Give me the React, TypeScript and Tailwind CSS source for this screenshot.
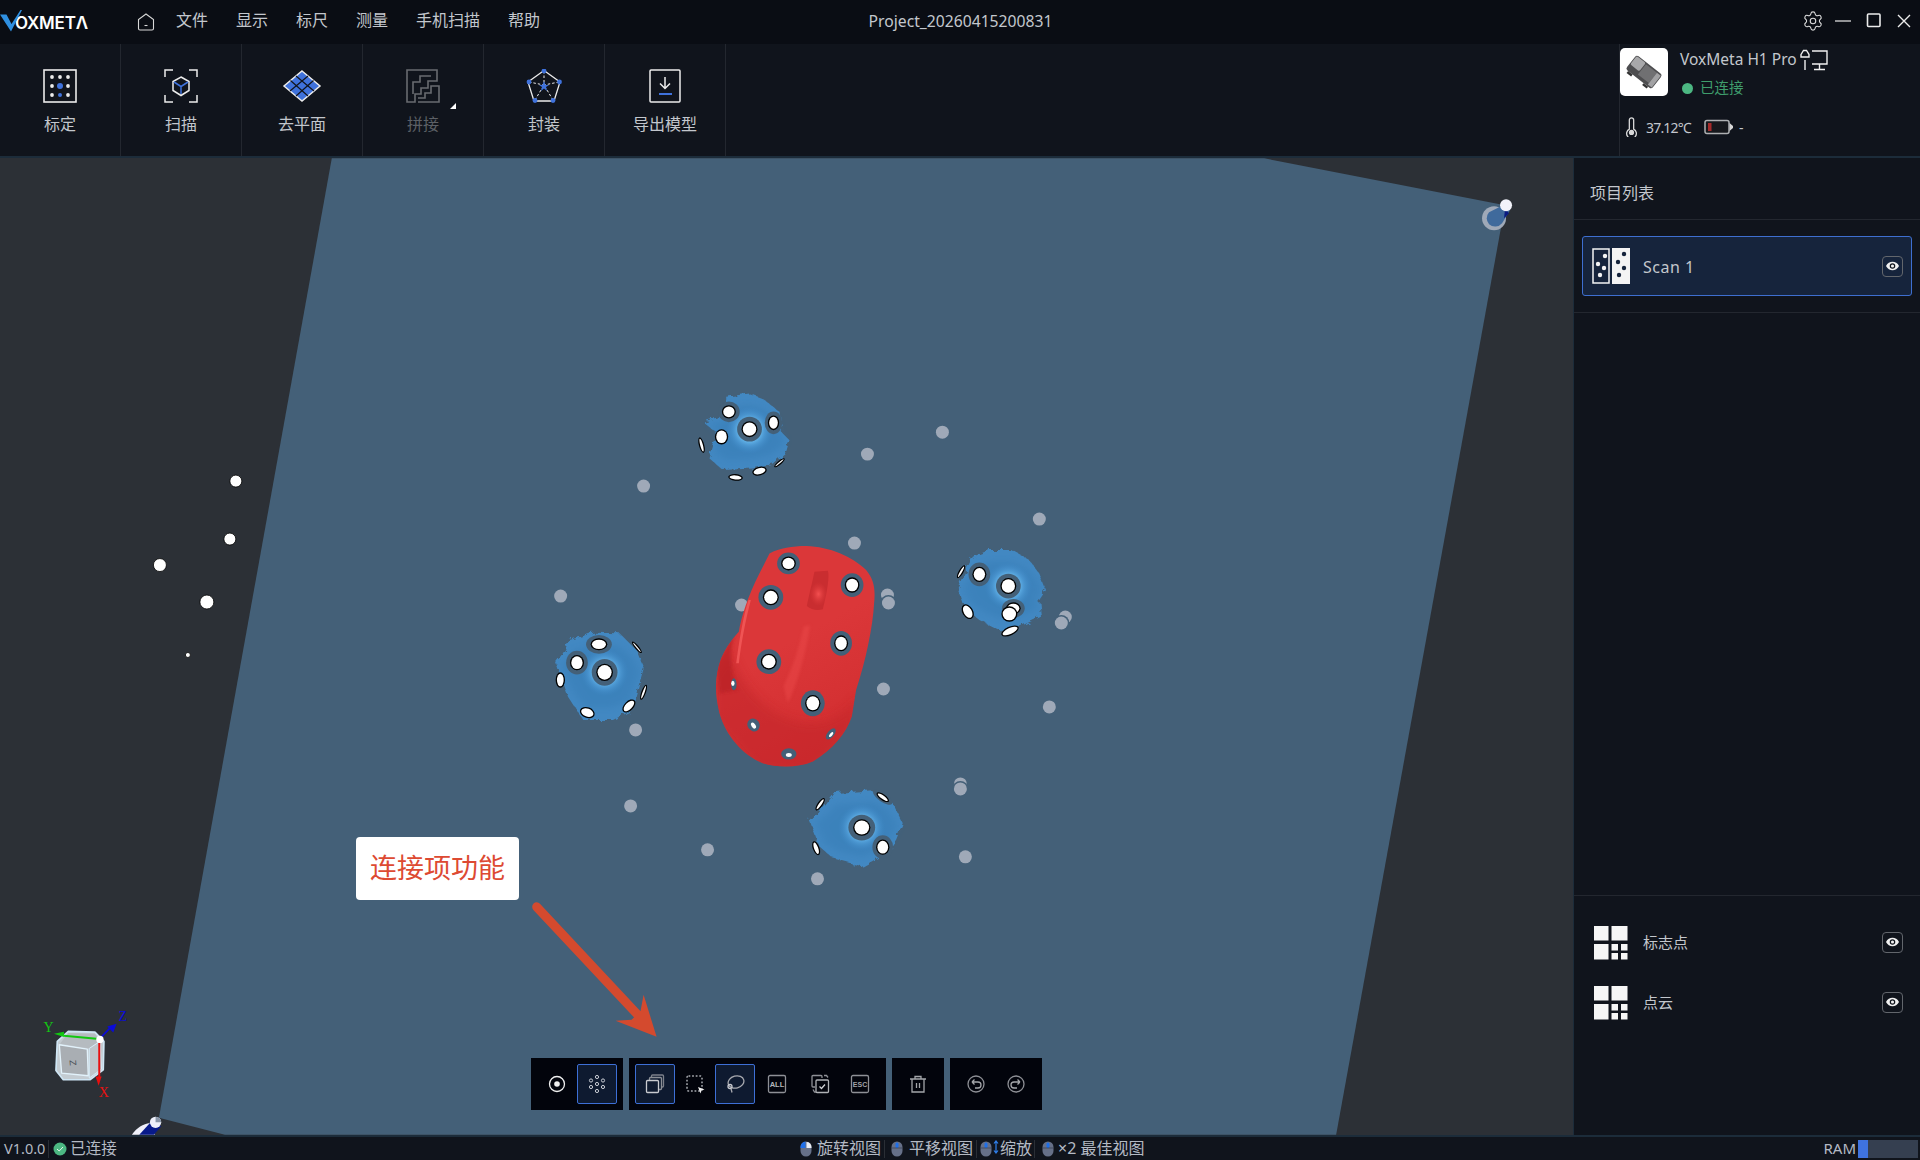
import React from "react";
import { Settings } from "lucide-react";

const W = "#ececec";
const B = "#3f72dc";

const IconCalib = () => (
  <svg viewBox="0 0 34 34" className="w-[34px] h-[34px]">
    <rect x="1" y="1" width="32" height="32" fill="none" stroke={W} strokeWidth="1.6" />
    {[9, 25].map((x) => [8, 17, 26].map((y) => <circle key={`${x}${y}`} cx={x} cy={y} r="1.9" fill={W} />))}
    <circle cx="17" cy="8" r="1.9" fill={W} />
    <circle cx="17" cy="17" r="3" fill={B} />
    <circle cx="17" cy="26" r="2" fill={B} />
  </svg>
);
const IconScan = () => (
  <svg viewBox="0 0 34 34" className="w-[34px] h-[34px]" fill="none" stroke={W} strokeWidth="1.5">
    <path d="M1 8V1H9M25 1H33V8M1 26V33H9M25 33H33V26" />
    <path d="M17 8L25 12.5V21.5L17 26.5L9 21.5V12.5Z" />
    <path d="M10 13L17 17.5L24 13M17 17.5V25" stroke={B} />
  </svg>
);
const IconPlane = () => (
  <svg viewBox="0 0 40 34" className="w-[40px] h-[34px]">
    <path d="M20 2L38 17L20 32L2 17Z" fill={B} stroke={W} strokeWidth="1.5" />
    <path d="M14 7L32 22M8.500 11.500L26 27M26 7L8 22M31.500 11.500L14 27" stroke="#10141c" strokeWidth="1.2" />
  </svg>
);
const IconStitch = () => (
  <svg viewBox="0 0 34 34" className="w-[34px] h-[34px]" fill="none" stroke="#686b70" strokeWidth="1.6">
    <path d="M1 33V1H31V12H22V19H15V25H9V33Z" />
    <path d="M7 25V13H14V7H25" />
    <path d="M12 33H33V17H25V24H19V29H12" />
  </svg>
);
const IconSeal = () => (
  <svg viewBox="0 0 36 34" className="w-[36px] h-[34px]">
    <path d="M18 1.500L34 13L28 32H8L2 13Z" fill="none" stroke={W} strokeWidth="1.3" />
    <path d="M18 2V16M3 13L18 16M33 13L18 16M9 31L18 16M27 31L18 16" stroke={W} strokeWidth="1" strokeDasharray="2.500 2" />
    <path d="M18 12L19.500 16H23L20 18L21 22L18 19.500L15 22L16 18L13 16H16.500Z" fill={B} />
    {[[18, 2], [33.5, 13], [3, 13], [9, 31.500], [27, 31.500]].map(([x, y]) => <circle key={x} cx={x} cy={y} r="2.400" fill={B} />)}
  </svg>
);
const IconExport = () => (
  <svg viewBox="0 0 34 34" className="w-[34px] h-[34px]">
    <rect x="2" y="1" width="30" height="32" rx="1" fill="none" stroke={W} strokeWidth="1.500" />
    <path d="M17 8V19M12 14.500L17 19.500L22 14.500" fill="none" stroke={W} strokeWidth="1.500" />
    <rect x="11" y="24" width="13" height="2" fill={B} />
  </svg>
);

const tools = [
  { label: "标定", icon: <IconCalib /> },
  { label: "扫描", icon: <IconScan /> },
  { label: "去平面", icon: <IconPlane /> },
  { label: "拼接", icon: <IconStitch />, dim: true },
  { label: "封装", icon: <IconSeal /> },
  { label: "导出模型", icon: <IconExport /> },
];

const Eye = () => (
  <div className="w-[21px] h-[21px] rounded-[4px] border border-[#62666c] flex items-center justify-center">
    <svg viewBox="0 0 14 10" className="w-[13px] h-[10px]">
      <path d="M0 5C3 -1 11 -1 14 5C11 11 3 11 0 5Z" fill="#f2f2f2" />
      <circle cx="7" cy="5" r="3" fill="#10141c" />
      <circle cx="7" cy="5" r="1.700" fill="#f2f2f2" />
    </svg>
  </div>
);

const GridIcon = () => (
  <svg viewBox="0 0 34 34" className="w-[34px] h-[34px]" fill="#f6f6f6">
    <rect x="0" y="0" width="14.500" height="14.500" />
    <rect x="17.500" y="0" width="16" height="14.500" />
    <rect x="0" y="18" width="14.500" height="15.500" />
    <rect x="17.500" y="18" width="6.500" height="6.500" />
    <rect x="27" y="18" width="6.500" height="6.500" />
    <rect x="17.500" y="27" width="6.500" height="6.500" />
    <rect x="27" y="27" width="6.500" height="6.500" />
  </svg>
);

const ScanIcon = () => (
  <svg viewBox="0 0 38 36" className="w-[38px] h-[36px]">
    <rect x="1" y="1" width="16" height="34" fill="#16243c" stroke="#f4f4f4" strokeWidth="1.500" />
    <rect x="20" y="0" width="18" height="36" fill="#f4f4f4" />
    {[[13, 8], [6, 16], [12, 20], [8, 27]].map(([x, y]) => <circle key={`${x}${y}`} cx={x} cy={y} r="2.200" fill="#f4f4f4" />)}
    {[[32, 6], [26, 14], [32, 20], [27, 27]].map(([x, y]) => <circle key={`${x}${y}`} cx={x} cy={y} r="2.200" fill="#16243c" />)}
  </svg>
);

const MouseIcon = ({ part }: { part: "l" | "m" }) => (
  <svg viewBox="0 0 12 16" className="w-[12px] h-[16px] shrink-0">
    <rect x="0.500" y="0.500" width="11" height="15" rx="5.500" fill="#667088" />
    {part === "l" ? (
      <path d="M5.500 0.500A5.500 5.500 0 0 0 0.500 6V7H5.500Z" fill="#1f6fe8" />
    ) : (
      <rect x="4.500" y="1.500" width="3" height="5.500" rx="1.500" fill="#1f6fe8" />
    )}
    {part === "l" && <path d="M6.500 1A5 5 0 0 1 11.500 6V7H6.500Z" fill="#e9edf3" />}
    {part === "m" && <path d="M0.500 7H11.500" stroke="#303848" strokeWidth="0.600" />}
  </svg>
);

type E = [number, number, number, number, number?];

const Mark = ({ m, halo }: { m: E; halo?: boolean }) => {
  const [x, y, rx, ry, a = 0] = m;
  return (
    <g transform={`rotate(${a} ${x} ${y})`}>
      {halo && <ellipse cx={x} cy={y} rx={rx * 1.55} ry={ry * 1.55} fill="#446078" />}
      <ellipse cx={x} cy={y} rx={rx} ry={ry} fill="#000" />
      <ellipse cx={x} cy={y} rx={Math.max(rx - 4, 1)} ry={Math.max(ry - 4, 1)} fill="#fff" />
    </g>
  );
};

const spheres: { tx: number; ty: number; poly: string; glow: [number, number]; marks: E[] }[] = [
  {
    tx: 680, ty: 380, glow: [210, 150],
    poly: "140,50 210,40 250,55 300,95 310,160 330,180 320,215 280,250 220,265 130,270 90,235 100,200 115,160 70,125 120,110 140,80",
    marks: [[148, 95, 21, 20], [210, 147, 24, 24], [282, 128, 17, 22], [126, 170, 20, 23], [66, 195, 8, 24, -15], [240, 273, 22, 13, -15], [168, 292, 22, 10, 5], [300, 248, 20, 6, -40]],
  },
  {
    tx: 940, ty: 530, glow: [207, 168],
    poly: "150,60 215,60 270,90 300,130 320,180 300,210 305,260 240,290 180,300 120,270 75,230 55,170 70,140 100,80",
    marks: [[120, 133, 21, 23], [222, 235, 22, 18], [207, 168, 24, 24], [210, 252, 24, 23], [65, 125, 7, 22, 30], [85, 245, 16, 24, -30], [212, 303, 28, 13, -25]],
  },
  {
    tx: 540, ty: 620, glow: [195, 157],
    poly: "90,60 160,38 240,40 290,90 315,150 300,200 280,270 220,300 130,300 85,230 50,125 70,100",
    marks: [[178, 73, 25, 18], [112, 128, 21, 23], [195, 157, 25, 26], [62, 180, 14, 23], [292, 82, 22, 6, 50], [312, 217, 7, 24, 20], [268, 258, 24, 14, -45], [143, 278, 23, 16, 20]],
  },
  {
    tx: 790, ty: 770, glow: [217, 173],
    poly: "130,70 260,60 310,100 340,160 320,210 290,250 220,290 130,265 90,230 60,150 100,110",
    marks: [[217, 173, 26, 25], [280, 232, 20, 23], [280, 82, 22, 9, 35], [92, 103, 22, 8, -55], [80, 235, 22, 10, 70]],
  },
];

const greyDots: [number, number][] = [
  [644, 486], [868, 454], [943, 432], [1040, 519], [855, 543], [742, 605], [561, 596], [884, 689],
  [1050, 707], [636, 730], [631, 806], [708, 850], [966, 857], [818, 879],
];
const doubleDots: [number, number, number, number][] = [
  [889, 603, 888, 595],
  [1062, 623, 1066, 617],
  [961, 789, 961, 784],
];
const whiteDots: [number, number, number][] = [[236, 481, 6], [230, 539, 6], [160, 565, 6.500], [207, 602, 7], [188, 655, 2.500]];

const Viewport = () => (
  <svg viewBox="0 158 1574 977" className="block w-full h-full">
    <defs>
      <radialGradient id="glow">
        <stop offset="0.400" stopColor="#6fc2f5" />
        <stop offset="0.650" stopColor="#55a3de" stopOpacity="0.600" />
        <stop offset="1" stopColor="#3d86c6" stopOpacity="0" />
      </radialGradient>
      <linearGradient id="body" x1="0.300" y1="0.500" x2="0.500" y2="1">
        <stop offset="0" stopColor="#db3739" />
        <stop offset="1" stopColor="#d22e30" />
      </linearGradient>
      <radialGradient id="lit">
        <stop offset="0" stopColor="#f35050" />
        <stop offset="1" stopColor="#dc3638" stopOpacity="0" />
      </radialGradient>
      <filter id="rough" x="-10%" y="-10%" width="120%" height="120%">
        <feTurbulence type="fractalNoise" baseFrequency="0.050" numOctaves="3" seed="4" />
        <feDisplacementMap in="SourceGraphic" scale="22" />
      </filter>
      <filter id="soft" x="-30%" y="-30%" width="160%" height="160%">
        <feGaussianBlur stdDeviation="14" />
      </filter>
      <filter id="soft2" x="-50%" y="-50%" width="200%" height="200%">
        <feGaussianBlur stdDeviation="5" />
      </filter>
      <clipPath id="mouseClip">
        <path d="M270 100C300 85 340 78 380 78C450 80 520 110 560 150C585 180 588 210 584 250C580 320 560 420 530 510L517 590C500 640 460 690 400 725C360 742 300 745 250 730C190 705 140 650 120 580C105 520 105 470 125 415C140 380 160 355 178 335C185 290 205 230 240 160Z" />
      </clipPath>
    </defs>
    <polygon points="332,158 1265,158 1506,205 1337,1135 225,1135 159,1118" fill="#446078" />

    {greyDots.map(([x, y]) => <circle key={`${x}${y}`} cx={x} cy={y} r="6.500" fill="#9fa9b8" />)}
    {doubleDots.map(([x, y, bx, by]) => (
      <g key={x}>
        <circle cx={bx} cy={by} r="6.500" fill="#9fa9b8" />
        <circle cx={x} cy={y} r="8" fill="#446078" />
        <circle cx={x} cy={y} r="6.500" fill="#9fa9b8" />
      </g>
    ))}
    {whiteDots.map(([x, y, r]) => <circle key={x} cx={x} cy={y} r={r} fill="#fff" stroke="#000" strokeWidth="0.800" />)}

    {spheres.map((s) => (
      <g key={s.tx} transform={`translate(${s.tx} ${s.ty}) scale(0.3333)`}>
        <polygon points={s.poly} fill="#4288c2" filter="url(#rough)" />
        <polygon points={s.poly} fill="#2f74ad" opacity="0.300" filter="url(#soft)" transform={`translate(${s.glow[0] * 0.12} ${s.glow[1] * 0.3}) scale(0.88 0.72)`} />
        <circle cx={s.glow[0]} cy={s.glow[1]} r="72" fill="url(#glow)" />
        {s.marks.map((m, i) => <Mark key={i} m={m} halo={i < 3} />)}
      </g>
    ))}

    <g transform="translate(680 520) scale(0.3333)">
      <path d="M270 100C300 85 340 78 380 78C450 80 520 110 560 150C585 180 588 210 584 250C580 320 560 420 530 510L517 590C500 640 460 690 400 725C360 742 300 745 250 730C190 705 140 650 120 580C105 520 105 470 125 415C140 380 160 355 178 335C185 290 205 230 240 160Z" fill="url(#body)" />
      <g clipPath="url(#mouseClip)">
        <path d="M185 470C240 560 320 610 400 610C460 610 510 570 535 530L517 640L400 760L230 750L100 600L100 480L150 400Z" fill="#c32729" opacity="0.550" filter="url(#soft)" />
        <path d="M170 330C150 380 150 450 175 510L120 520L110 430Z" fill="#b92325" opacity="0.700" filter="url(#soft2)" />
        <path d="M372 320L392 315C385 370 360 480 325 550L312 500C340 440 360 380 372 320Z" fill="#f05050" opacity="0.400" filter="url(#soft2)" />
      </g>
      <path d="M207 240C190 290 178 370 170 430L178 430C185 370 198 300 214 240Z" fill="#ef5454" />
      <path d="M405 155L445 152C452 170 440 230 430 268C415 272 395 270 382 258C390 220 400 180 405 155Z" fill="#c92d30" />
      <ellipse cx="417" cy="222" rx="26" ry="36" fill="url(#lit)" />
      {([[327, 130, 22, 21], [274, 232, 24, 24], [518, 195, 22, 23], [485, 370, 21, 24], [268, 425, 24, 24], [400, 550, 23, 25]] as E[]).map((m, i) => <Mark key={i} m={m} halo />)}
      <ellipse cx="163" cy="493" rx="8" ry="18" fill="#446078" />
      <ellipse cx="160" cy="490" rx="5" ry="8" fill="#fff" />
      <ellipse cx="222" cy="615" rx="18" ry="20" fill="#446078" transform="rotate(-35 222 615)" />
      <ellipse cx="222" cy="617" rx="6" ry="10" fill="#fff" transform="rotate(-35 222 617)" />
      <ellipse cx="454" cy="642" rx="10" ry="20" fill="#446078" transform="rotate(40 454 642)" />
      <ellipse cx="455" cy="644" rx="4" ry="9" fill="#fff" transform="rotate(40 455 644)" />
      <ellipse cx="328" cy="702" rx="23" ry="17" fill="#446078" />
      <ellipse cx="328" cy="705" rx="9" ry="6" fill="#fff" />
    </g>

    <g>
      <circle cx="1495" cy="218" r="12" fill="#9fa9b8" />
      <path d="M1504 205L1511 210L1503 223A9 9 0 0 1 1490 224A9 9 0 0 1 1490 212Z" fill="#3f6a9c" />
      <path d="M1506 209L1510 213L1505 218Z" fill="#0a1a80" />
      <circle cx="1507" cy="205" r="6" fill="#f2f2fa" />
    </g>

    <g transform="translate(0 1000) scale(0.3333)">
      <path d="M396 405C410 385 430 372 450 370L465 405Z" fill="#f0f0fa" />
      <path d="M418 405L455 365L484 380L462 405Z" fill="#081a8a" />
      <circle cx="467" cy="368" r="17" fill="#eef0fa" />
      <path d="M467 351A17 17 0 0 1 484 368L467 368Z" fill="#8a96a8" />
      <path d="M172 125L205 95L285 97L312 125L310 210L270 240H190L168 212Z" fill="#c4ccd2" stroke="#cfe6f5" strokeWidth="5" strokeLinejoin="round" />
      <path d="M178 135L262 148L265 228L185 220Z" fill="#a9aeb3" stroke="#e2f2fb" strokeWidth="4" strokeLinejoin="round" />
      <path d="M205 100L285 102L300 122L268 146L180 132Z" fill="#b5bbc0" />
      <path d="M268 146L300 125L305 208L268 235Z" fill="#bfc6cb" stroke="#d5ebf7" strokeWidth="3" />
      <text x="219" y="199" fontSize="28" fontFamily="Liberation Sans" fill="#4a4f55" textAnchor="middle" transform="rotate(85 219 189)">Z</text>
      <path d="M298 118L192 108" stroke="#12c812" strokeWidth="6" />
      <path d="M162 102L192 96V112Z" fill="#12c812" />
      <path d="M298 118L330 85" stroke="#0b0bd8" strokeWidth="5" />
      <path d="M350 72L340 98L322 80Z" fill="#0b0bd8" />
      <path d="M298 118V232" stroke="#e81010" strokeWidth="6" />
      <path d="M296 258L287 230H305Z" fill="#e81010" />
      <circle cx="300" cy="119" r="11" fill="#fff" />
      <text x="146" y="98" fontSize="42" fontFamily="Liberation Serif" fill="#12c812" textAnchor="middle">Y</text>
      <text x="369" y="65" fontSize="42" fontFamily="Liberation Serif" fill="#0b0bd8" textAnchor="middle">Z</text>
      <text x="312" y="292" fontSize="42" fontFamily="Liberation Serif" fill="#e81010" textAnchor="middle">X</text>
    </g>

    <path d="M537 907L640 1017" stroke="#d44a2e" strokeWidth="9" strokeLinecap="round" />
    <path d="M657 1037L616 1021L632 1020L641 1011L644 995Z" fill="#d44a2e" />
  </svg>
);

const Ico = ({ children, sel, className = "" }: { children: React.ReactNode; sel?: boolean; className?: string }) => (
  <div className={`w-10 h-10 flex items-center justify-center rounded-[2px] ${sel ? "bg-[#0e1a30] border border-[#3d6fd6]" : ""} ${className}`}>
    <svg viewBox="0 0 20 20" className="w-5 h-5" fill="none" stroke="#9a9da3" strokeWidth="1.300">
      {children}
    </svg>
  </div>
);

const FloatBar = () => (
  <div className="absolute bottom-[25px] left-[531px] flex gap-[6px]">
    <div className="flex h-[52px] items-center px-[6px] bg-[#02040c]">
      <Ico>
        <circle cx="10" cy="10" r="7.500" stroke="#f0f0f0" />
        <circle cx="10" cy="10" r="2.800" fill="#f0f0f0" stroke="none" />
      </Ico>
      <Ico sel>
        {[[10, 3], [10, 10], [10, 17], [4, 6.500], [16, 6.500], [4, 13], [16, 13]].map(([x, y]) => (
          <circle key={`${x}${y}`} cx={x} cy={y} r="1.600" stroke="#c8ccd4" strokeWidth="1" />
        ))}
      </Ico>
    </div>
    <div className="flex h-[52px] items-center px-[6px] bg-[#02040c]">
      <Ico sel>
        <rect x="6.500" y="1" width="12" height="12" rx="1" stroke="#7c808a" />
        <rect x="4.500" y="3.500" width="12" height="12" rx="1" stroke="#8a8e96" fill="#0e1a30" />
        <rect x="1.500" y="6.500" width="12" height="12" rx="1" stroke="#c8cad0" fill="#0e1a30" />
      </Ico>
      <Ico>
        <rect x="2" y="2" width="15" height="15" rx="1.500" strokeDasharray="1.800 1.800" strokeWidth="1.500" stroke="#a8aab0" />
        <path d="M13 13L19.500 15.500L16.500 16.500L15.500 19.500Z" fill="#f0f0f0" stroke="none" />
      </Ico>
      <Ico sel>
        <ellipse cx="11" cy="8" rx="8" ry="6" transform="rotate(-15 11 8)" stroke="#a8aab0" />
        <circle cx="5" cy="12.500" r="2" stroke="#c8cad0" />
        <path d="M6 14.500L7 18.500" stroke="#a8aab0" />
      </Ico>
      <Ico className="ml-[2px]">
        <rect x="1.500" y="1.500" width="17" height="17" rx="1.500" stroke="#8e9096" strokeWidth="1.300" />
        <text x="10" y="13" fontSize="7.500" fontWeight="700" fontFamily="Liberation Sans" fill="#b4b6ba" stroke="none" textAnchor="middle">ALL</text>
      </Ico>
      <Ico className="ml-[3px]">
        <path d="M12 4V2.500A1 1 0 0 0 11 1.500H3A1 1 0 0 0 2 2.500V12A1 1 0 0 0 3 13H5" stroke="#8e9096" />
        <rect x="6" y="6" width="12.500" height="12.500" rx="1" stroke="#b0b2b6" />
        <path d="M9.500 12.500L11.500 14.500L15 10.500" stroke="#d0d2d6" />
        <path d="M3 15.500L4.500 18H6M14 1.500H16.500L18 3.500" stroke="#8e9096" />
      </Ico>
      <Ico>
        <rect x="1.500" y="1.500" width="17" height="17" rx="1.500" stroke="#8e9096" strokeWidth="1.300" />
        <text x="10" y="12.800" fontSize="7" fontWeight="700" fontFamily="Liberation Sans" fill="#a0a2a8" stroke="none" textAnchor="middle">ESC</text>
      </Ico>
    </div>
    <div className="flex h-[52px] items-center px-[6px] bg-[#02040c]">
      <Ico>
        <path d="M2 5H18M7 5V2.500H13V5M4 5V18H16V5M8.500 9V14M11.500 9V14" stroke="#a4a6aa" />
      </Ico>
    </div>
    <div className="flex h-[52px] items-center px-[6px] bg-[#02040c]">
      <Ico>
        <circle cx="10" cy="10" r="8" stroke="#8e9096" />
        <path d="M6 8H12A3 3 0 0 1 12 14H9M6 8L8.500 5.500M6 8L8.500 10.500" stroke="#a4a6aa" />
      </Ico>
      <Ico>
        <circle cx="10" cy="10" r="8" stroke="#8e9096" />
        <path d="M14 8H8A3 3 0 0 0 8 14H11M14 8L11.500 5.500M14 8L11.500 10.500" stroke="#a4a6aa" />
      </Ico>
    </div>
  </div>
);

export default function App() {
  return (
    <div className="w-[1920px] h-[1160px] flex flex-col overflow-hidden bg-[#10141c] text-[#c3c7cd] font-['Noto_Sans','Noto_Sans_CJK_SC',sans-serif]">
      {/* title bar */}
      <div className="h-[44px] shrink-0 flex items-center bg-[#0a0d14]">
        <div className="flex-1 basis-0 flex items-center">
          <div className="relative w-[137px] h-[44px] flex items-center">
            <svg viewBox="0 0 24 22" className="absolute left-0 top-[10px] w-[24px] h-[22px]">
              <path d="M0 4.500L6.500 4.500L11.500 14L20.500 0H22L11 21.500Z" fill="#2f8fe0" />
            </svg>
            <span className="ml-[15px] mt-[3px] text-[17px] font-semibold text-white font-['Inter',sans-serif] tracking-[-0.2px]">OXMETΛ</span>
          </div>
          <svg viewBox="0 0 18 18" className="w-[18px] h-[18px] mr-[21px]" fill="none" stroke="#d8d8d8" strokeWidth="1.100">
            <path d="M9 1L16.500 6.500V15.500A1.500 1.500 0 0 1 15 17H3A1.500 1.500 0 0 1 1.500 15.500V6.500Z" />
            <path d="M7.500 12.500H10.500" />
          </svg>
          <nav className="flex gap-[28px] text-[16px] leading-[24px] -mt-[4px]">
            {["文件", "显示", "标尺", "测量", "手机扫描", "帮助"].map((t) => <span key={t}>{t}</span>)}
          </nav>
        </div>
        <div className="ml-[9px] text-[15.700px] text-[#c3c7cd]">Project_20260415200831</div>
        <div className="flex-1 basis-0 flex items-center justify-end pr-[8px] -mt-[2px]">
          <Settings size={22} color="#dcdcdc" strokeWidth={1.200} />
          <svg viewBox="0 0 16 16" className="w-4 h-4 ml-[11px]"><path d="M0 8H16" stroke="#dcdcdc" strokeWidth="1.300" /></svg>
          <svg viewBox="0 0 16 16" className="w-4 h-4 ml-[15px]"><rect x="1.500" y="1" width="12.500" height="12.500" rx="1" fill="none" stroke="#ececec" strokeWidth="1.600" /></svg>
          <svg viewBox="0 0 16 16" className="w-4 h-4 ml-[14px]"><path d="M2 2L14 14M14 2L2 14" stroke="#ececec" strokeWidth="1.400" /></svg>
        </div>
      </div>

      {/* toolbar */}
      <div className="h-[114px] shrink-0 flex bg-[#10141c] border-b-2 border-[#1c2c3a]">
        {tools.map((t) => (
          <div key={t.label} className="relative w-[121px] border-r border-[#23272f] pt-[25px] flex flex-col items-center">
            <div className="h-[34px] flex items-center justify-center">{t.icon}</div>
            <div className={`mt-[9px] text-[16px] leading-[24px] ${t.dim ? "text-[#5c6066]" : "text-[#c3c7cd]"}`}>{t.label}</div>
            {t.dim && <div className="absolute left-[87px] top-[59px] w-0 h-0 border-l-[6px] border-l-transparent border-b-[6px] border-b-white" />}
          </div>
        ))}
        <div className="flex-1" />
        <div className="w-[301px] border-l border-[#23272f] pt-[4px]">
          <div className="flex">
            <div className="w-[48px] h-[48px] bg-white rounded-[5px] flex items-center justify-center">
              <svg viewBox="0 0 48 48" className="w-[48px] h-[48px]">
                <g transform="translate(24 24) rotate(38) scale(0.820) translate(-24 -24)">
                  <rect x="4" y="13" width="40" height="22" rx="3" fill="#4d4d4f" />
                  <rect x="5" y="14" width="14" height="13" rx="2" fill="#a8a8aa" />
                  <rect x="20" y="15" width="17" height="16" fill="#707072" />
                  <rect x="37" y="15" width="6" height="18" fill="#a2a2a4" />
                  <rect x="8" y="35" width="7" height="3" fill="#333" />
                  <rect x="32" y="35" width="7" height="3" fill="#333" />
                </g>
              </svg>
            </div>
            <div className="ml-[12px]">
              <div className="flex items-center h-[24px] text-[15.500px] text-[#c3c7cd]">
                VoxMeta H1 Pro
                <svg viewBox="0 0 28 22" className="w-[28px] h-[22px] ml-[3px]" fill="none" stroke="#f0f0f0" strokeWidth="1.400">
                  <path d="M5 21V11M1 5.500L3.500 1.500H6.500L9 5.500V8H1Z" />
                  <path d="M12 2H27V15H12M19.500 15V20M14 20.500H25" />
                </svg>
              </div>
              <div className="flex items-center h-[24px] mt-[4px]">
                <span className="w-[11px] h-[11px] rounded-full bg-[#4cb782] ml-[2px]" />
                <span className="ml-[7px] text-[14.500px] text-[#3f9d6c]">已连接</span>
              </div>
            </div>
          </div>
          <div className="flex items-center mt-[16px] h-[22px] ml-[5px] text-[14px]">
            <svg viewBox="0 0 12 18" className="w-[13px] h-[20px]" fill="none" stroke="#d8d8d8" strokeWidth="1.200">
              <path d="M4 11V2.500A2 2 0 0 1 8 2.500V11A4.500 4.500 0 1 1 4 11Z" />
              <circle cx="6" cy="14" r="1.800" fill="#d8d8d8" />
            </svg>
            <span className="ml-[8px] tracking-[-0.8px]">37.12℃</span>
            <svg viewBox="0 0 30 16" className="w-[30px] h-[16px] ml-[13px]">
              <rect x="1" y="1.500" width="24" height="13" rx="2" fill="#16181c" stroke="#aeb0b2" strokeWidth="1.500" />
              <rect x="4" y="4" width="3.500" height="8" fill="#a52a2a" />
              <path d="M25.500 4L29 7V9L25.500 12Z" fill="#d8d8d8" />
            </svg>
            <span className="ml-[5px]">-</span>
          </div>
        </div>
      </div>

      {/* main */}
      <div className="flex-1 min-h-0 flex">
        <div className="relative w-[1573px] shrink-0 bg-[#2c3036] overflow-hidden">
          <Viewport />
          <div className="absolute left-[356px] top-[679px] w-[163px] h-[63px] bg-white rounded-[4px] flex items-center justify-center text-[27px] text-[#dd4a32]">连接项功能</div>
          <FloatBar />
        </div>
        <div className="flex-1 flex flex-col bg-[#10141c] border-l border-[#1c2c3a]">
          <div className="h-[62px] shrink-0 flex items-center pl-[16px] text-[16px] border-b border-[#23272f] pt-[8px]">项目列表</div>
          <div className="h-[93px] shrink-0 px-[8px] pt-[16px] border-b border-[#23272f]">
            <div className="h-[60px] flex items-center rounded-[3px] border border-[#3e6fd0] bg-[#16243c] pl-[9px] pr-[8px]">
              <ScanIcon />
              <span className="ml-[13px] mt-[1px] text-[16px] text-[#c3c7cd] tracking-[0.5px]">Scan 1</span>
              <span className="ml-auto"><Eye /></span>
            </div>
          </div>
          <div className="flex-1" />
          <div className="h-[240px] shrink-0 border-t border-[#23272f] pt-[30px] pl-[20px] pr-[16px] flex flex-col gap-[26px]">
            {["标志点", "点云"].map((t) => (
              <div key={t} className="h-[34px] flex items-center">
                <GridIcon />
                <span className="ml-[15px] -mt-[2px] text-[15px]">{t}</span>
                <span className="ml-auto -mt-[2px] mr-px"><Eye /></span>
              </div>
            ))}
          </div>
        </div>
      </div>

      {/* status bar */}
      <div className="h-[25px] shrink-0 flex items-center border-t-2 border-[#1c2c3a] bg-[#10141c] text-[15.500px] text-[#b4bac4] leading-[23px]">
        <div className="w-[800px] shrink-0 flex items-center pl-[4px]">
          <span className="text-[14.500px]">V1.0.0</span>
          <span className="ml-[3px] w-px h-[18px] bg-[#2a2e35]" />
          <svg viewBox="0 0 14 14" className="w-[14px] h-[14px] ml-[4px]">
            <circle cx="7" cy="7" r="6.500" fill="#4cb782" />
            <path d="M4 7L6.200 9L10 5" fill="none" stroke="#e8f5ee" strokeWidth="1" />
          </svg>
          <span className="ml-[3px]">已连接</span>
        </div>
        <div className="flex items-center">
          <MouseIcon part="l" />
          <span className="ml-[5px] text-[16px]">旋转视图</span>
          <span className="mx-[3px] w-px h-[18px] bg-[#2a2e35]" />
          <span className="ml-[3px]"><MouseIcon part="m" /></span>
          <span className="ml-[6px] text-[16px]">平移视图</span>
          <span className="mx-[3px] w-px h-[18px] bg-[#2a2e35]" />
          <MouseIcon part="m" />
          <svg viewBox="0 0 6 14" className="w-[6px] h-[14px] ml-px -mt-[4px]"><path d="M3 1V13M1 3.500L3 1L5 3.500M1 10.500L3 13L5 10.500" fill="none" stroke="#2f80ed" strokeWidth="1.200" /></svg>
          <span className="ml-[1px] text-[16px]">缩放</span>
          <span className="mx-[2px] w-px h-[18px] bg-[#2a2e35]" />
          <span className="ml-[5px]"><MouseIcon part="m" /></span>
          <span className="ml-[4px] text-[16px] whitespace-nowrap">×2 最佳视图</span>
        </div>
        <div className="flex-1 flex items-center justify-end pr-[2px]">
          <span className="text-[15px]">RAM</span>
          <div className="ml-[2px] w-[60px] h-[18px] bg-[#353f50]">
            <div className="w-[10px] h-full bg-[#3f73e0]" />
          </div>
        </div>
      </div>
    </div>
  );
}
